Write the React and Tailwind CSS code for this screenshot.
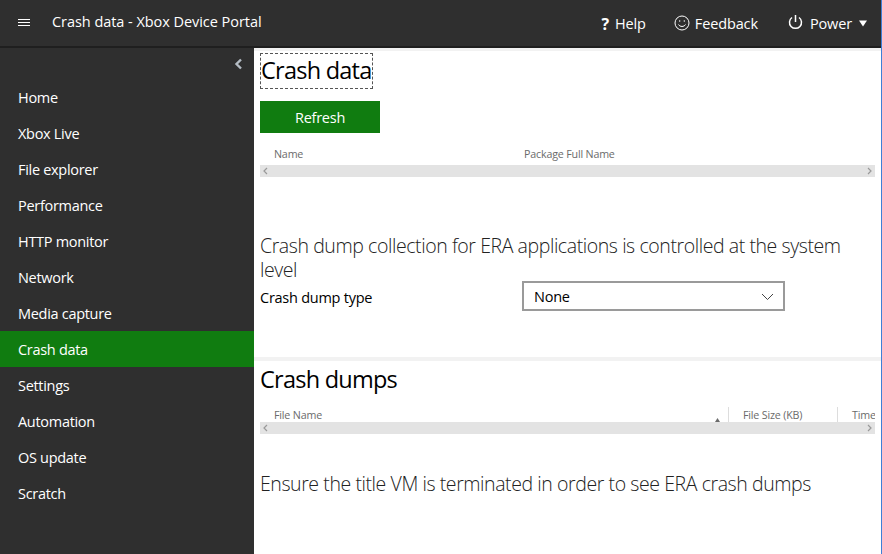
import React from "react";

const items = ["Home","Xbox Live","File explorer","Performance","HTTP monitor","Network","Media capture","Crash data","Settings","Automation","OS update","Scratch"];

function Bar({ w = "w-[615px]" }) {
  return (
    <div className={`${w} h-3 bg-[#e3e3e3] flex items-center justify-between px-[3px] text-[#999999]`}>
      <svg width="5" height="8" viewBox="0 0 5 8" fill="none" stroke="currentColor" strokeWidth="1.2"><path d="M4 1 1 4l3 3" /></svg>
      <svg width="5" height="8" viewBox="0 0 5 8" fill="none" stroke="currentColor" strokeWidth="1.2"><path d="M1 1l3 3-3 3" /></svg>
    </div>
  );
}

export default function App() {
  return (
    <div className="w-[882px] h-[554px] overflow-hidden flex flex-col bg-white border-r border-r-[#3f7fd6] font-['Open_Sans','Noto_Sans',sans-serif] tracking-[-0.25px]">
      <header className="h-[46px] shrink-0 bg-[#2f2f2f] text-white flex items-center">
        <svg className="ml-[18px] -mt-[1px]" width="12" height="7" viewBox="0 0 12 7" stroke="white" strokeWidth="1"><path d="M0 .5h12M0 3.5h12M0 6.5h12" /></svg>
        <div className="ml-[22px] text-[14.5px] leading-5 -mt-[3px] tracking-[-0.05px]">Crash data - Xbox Device Portal</div>
        <div className="ml-auto flex items-center text-[14.5px] leading-5 tracking-[-0.13px] mt-[1px]">
          <span className="font-bold text-[16px] mr-[6px]">?</span>
          <span className="mr-[28px]">Help</span>
          <svg className="mr-[5px] -mt-[1px]" width="16" height="16" viewBox="0 0 16 16" fill="none" stroke="white" strokeWidth="1"><circle cx="8" cy="8" r="7" /><circle cx="5.7" cy="6" r=".7" fill="white" stroke="none" /><circle cx="10.3" cy="6" r=".7" fill="white" stroke="none" /><path d="M4.5 9.5c1.5 2.6 5.5 2.6 7 0" /></svg>
          <span className="mr-[30px]">Feedback</span>
          <svg className="mr-[7px] -mt-1" width="15" height="16" viewBox="0 0 15 16" fill="none" stroke="white" strokeWidth="1.5"><path d="M7.5 1v7M4 3.5a6 6 0 1 0 7 0" /></svg>
          <span className="mr-[7px]">Power</span>
          <svg className="mr-[14px]" width="8" height="7" viewBox="0 0 8 7" fill="white"><path d="M0 .5h8L4 6.5z" /></svg>
        </div>
      </header>
      <div className="h-[2px] shrink-0 bg-[#1f1f1f]" />
      <div className="flex flex-1 min-h-0">
        <aside className="w-[254px] shrink-0 bg-[#2f2f2f] text-white">
          <div className="h-[31px] flex justify-end items-center pr-[11px]">
            <svg width="9" height="12" viewBox="0 0 9 12" fill="none" stroke="#b4bcc4" strokeWidth="2.4"><path d="M7 1.5 2.5 6 7 10.5" /></svg>
          </div>
          {items.map((t) => (
            <div key={t} className={`h-9 pl-[18px] pt-[2px] flex items-center text-[14.5px] tracking-[-0.3px] ${t === "Crash data" ? "bg-[#107c10]" : ""}`}>{t}</div>
          ))}
        </aside>
        <main className="flex-1 min-w-0 text-black flex flex-col">
          <div className="h-[3px] shrink-0 bg-[#f2f2f2]" />
          <section className="pl-[6px] h-[306px] shrink-0 flex flex-col">
            <h1 className="mt-[2px] self-start border border-dashed border-[#555555] h-9 text-[23.5px] leading-[33px] font-normal tracking-[-0.75px]">Crash data</h1>
            <button className="mt-3 w-[120px] h-8 pt-[1px] bg-[#107c10] text-white text-[14.5px]">Refresh</button>
            <div className="mt-[14px] h-[18px] pb-[3px] flex text-[10.7px] text-[#6b6b6b] items-center pl-[14px] tracking-[-0.18px]">
              <span className="w-[250px]">Name</span>
              <span>Package Full Name</span>
            </div>
            <Bar />
            <p className="mt-[57px] w-[600px] text-[19.5px] leading-6 font-light text-[#222222] tracking-[-0.42px]">Crash dump collection for ERA applications is controlled at the system level</p>
            <div className="-mt-[1px] flex items-center">
              <label className="w-[262px] text-[14.5px] mt-[3px]">Crash dump type</label>
              <div className="w-[263px] h-[30px] border-2 border-[#9a9a9a] flex items-center justify-between pl-[10px] pr-[9px] pt-[1px] text-[14.5px]">
                None
                <svg width="13" height="8" viewBox="0 0 13 8" fill="none" stroke="#444444" strokeWidth="1"><path d="m1 1 5.5 5.5L12 1" /></svg>
              </div>
            </div>
          </section>
          <div className="h-1 shrink-0 bg-[#f2f2f2]" />
          <section className="pl-[6px] flex flex-col">
            <h2 className="mt-[2px] h-9 text-[23.5px] leading-[33px] font-normal tracking-[-0.75px]">Crash dumps</h2>
            <div className="mt-[8px] h-[15px] flex text-[10.7px] text-[#6b6b6b] items-center w-[615px] overflow-hidden tracking-[-0.18px]">
              <span className="pl-[14px] pt-[2px] w-[468px] shrink-0 relative h-full flex items-center">File Name
                <svg className="absolute right-[8px] bottom-0" width="5" height="4" viewBox="0 0 5 4" fill="#6b6b6b"><path d="M2.5 0 5 4H0z" /></svg>
              </span>
              <span className="border-l border-[#dddddd] h-full pl-[14px] pt-[2px] w-[109px] flex items-center shrink-0">File Size (KB)</span>
              <span className="border-l border-[#dddddd] h-full pl-[14px] pt-[2px] flex items-center shrink-0">Time</span>
            </div>
            <Bar />
            <p className="mt-[38px] text-[19.5px] leading-6 font-light text-[#222222] tracking-[-0.42px]">Ensure the title VM is terminated in order to see ERA crash dumps</p>
          </section>
        </main>
      </div>
    </div>
  );
}
